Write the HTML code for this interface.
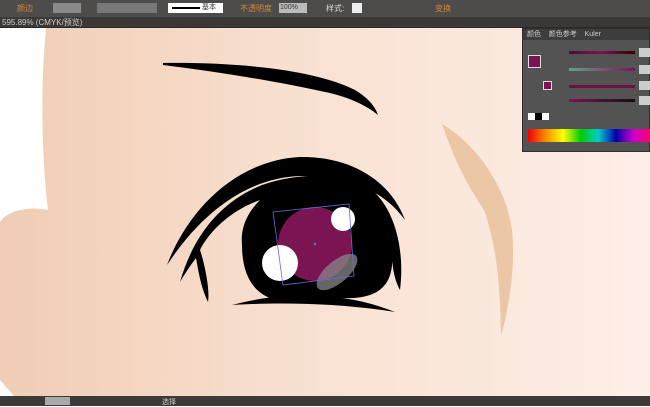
<!DOCTYPE html>
<html><head><meta charset="utf-8"><style>
*{margin:0;padding:0;box-sizing:border-box}
body{width:650px;height:406px;overflow:hidden;background:#fff;font-family:"Liberation Sans","Noto Sans CJK SC",sans-serif;position:relative}
.tb{position:absolute;left:0;top:0;width:650px;height:17px;background:#4e4c4b;font-size:8px;color:#ddd}
.tb span{position:absolute;top:3px}
.st{position:absolute;left:0;top:17px;width:650px;height:11px;background:#3a3938;font-size:8px;color:#ccc;padding-left:2px;line-height:11px;border-bottom:1px solid #2a2a2a}
.box{position:absolute;top:3px;height:10px;background:#8a8a8a}
.bot{position:absolute;left:0;top:396px;width:650px;height:10px;background:#3c3b3a;font-size:7px;color:#ccc}
.panel{position:absolute;left:522px;top:28px;width:128px;height:124px;background:#535353;border:1px solid #2e2e2e}
</style></head><body>
<svg style="position:absolute;left:0;top:28px" width="650" height="368" viewBox="0 28 650 368">
<defs><linearGradient id="g" x1="0" x2="1" y1="0" y2="0"><stop offset="0" stop-color="#f0cdb4"/><stop offset="0.5" stop-color="#f9e2d3"/><stop offset="1" stop-color="#fdeee7"/></linearGradient></defs>
<rect x="0" y="28" width="650" height="368" fill="url(#g)"/>
<path d="M0 28H46C40 90 42 160 48 210C30 206 8 210 0 222Z" fill="#fff"/>
<path d="M0 380L14 396H0Z" fill="#fff"/>
<path d="M442 124C470 140 505 180 512 230C516 270 508 310 501 336C500 290 498 250 484 210C470 188 458 170 442 124Z" fill="#ebc7a6"/>
<path d="M163 63C250 62 320 72 355 90C368 98 375 106 378 115C365 104 345 96 325 92C280 82 220 72 163 65Z" fill="#000"/>
<path d="M167 265C190 205 240 160 300 157C350 156 390 180 405 220C385 192 350 175 300 176C245 178 200 215 167 265Z" fill="#000"/>
<path d="M180 282C195 230 225 200 262 185C300 172 345 172 372 190C395 210 405 250 400 290C392 275 392 258 392 250C395 285 380 300 340 298L270 298C250 290 242 270 242 245C240 225 250 210 260 200C232 210 210 230 200 250C205 265 210 290 208 302C200 285 198 268 196 258C190 266 184 275 180 282Z" fill="#000"/>
<path d="M232 305C280 292 340 290 395 312C340 303 280 302 232 305Z" fill="#000"/>
<circle cx="315" cy="244" r="37" fill="#7b1452"/>
<circle cx="280" cy="263" r="18" fill="#fff"/>
<circle cx="343" cy="219" r="12" fill="#fff"/>
<ellipse cx="337" cy="272" rx="25" ry="11" transform="rotate(-40 337 272)" fill="#888" opacity=".75"/>
<polygon points="273,212 349,204 354,276 283,285" fill="none" stroke="#6a6ad8" stroke-width=".8"/>
<circle cx="315" cy="244" r="1.2" fill="#6a6ad8"/>
</svg>
<div class="tb">
<span style="left:17px;color:#d08a30">颜边</span>
<div class="box" style="left:53px;width:28px"></div>
<div class="box" style="left:97px;width:60px;background:#777"></div>
<div class="box" style="left:168px;width:55px;background:#fff;color:#333;font-size:7px;padding-left:34px;line-height:10px">基本<div style="position:absolute;left:4px;top:4px;width:28px;height:2px;background:#000"></div></div>
<span style="left:240px;color:#d08a30">不透明度</span>
<div class="box" style="left:279px;width:28px;background:#bbb;color:#333;font-size:7px;line-height:10px;padding-left:1px">100%</div>
<span style="left:326px">样式:</span>
<div class="box" style="left:352px;width:10px;background:#eee"></div>
<span style="left:435px;color:#d08a30">变换</span>
</div>
<div class="st">595.89% (CMYK/预览)</div>
<div class="panel">
<div style="height:11px;background:#3d3d3d;font-size:7px;color:#ccc;line-height:11px;padding-left:4px">颜色 &nbsp;&nbsp; 颜色参考 &nbsp;&nbsp; Kuler</div>
<div style="position:absolute;left:5px;top:26px;width:13px;height:13px;background:#7b1452;border:1px solid #ddd"></div>
<div style="position:absolute;left:20px;top:52px;width:9px;height:9px;background:#7b1452;border:1px solid #ddd"></div>
<div style="position:absolute;left:46px;top:22px;width:66px;height:3px;background:linear-gradient(90deg,#4a1030,#7b1452,#300)"></div>
<div style="position:absolute;left:46px;top:39px;width:66px;height:3px;background:linear-gradient(90deg,#6c9e8c,#7b1452)"></div>
<div style="position:absolute;left:46px;top:56px;width:66px;height:3px;background:#6a1240"></div>
<div style="position:absolute;left:46px;top:70px;width:66px;height:3px;background:linear-gradient(90deg,#7b1452,#111)"></div>
<div style="position:absolute;left:116px;top:19px;width:12px;height:9px;background:#ccc"></div>
<div style="position:absolute;left:116px;top:36px;width:12px;height:9px;background:#ccc"></div>
<div style="position:absolute;left:116px;top:52px;width:12px;height:9px;background:#ccc"></div>
<div style="position:absolute;left:116px;top:67px;width:12px;height:9px;background:#ccc"></div>
<div style="position:absolute;left:5px;top:84px;width:7px;height:7px;background:#fff"></div>
<div style="position:absolute;left:12px;top:84px;width:7px;height:7px;background:#000"></div>
<div style="position:absolute;left:19px;top:84px;width:7px;height:7px;background:#fff"></div>
<div style="position:absolute;left:5px;top:100px;width:123px;height:13px;background:linear-gradient(90deg,#e00,#f80,#ff0,#0c0,#0cc,#00a,#c0c,#f06);"></div>
</div>
<div class="bot"><div style="position:absolute;left:45px;top:1px;width:25px;height:8px;background:#aaa"></div><span style="position:absolute;left:162px;top:1px">选择</span></div>
</body></html>
